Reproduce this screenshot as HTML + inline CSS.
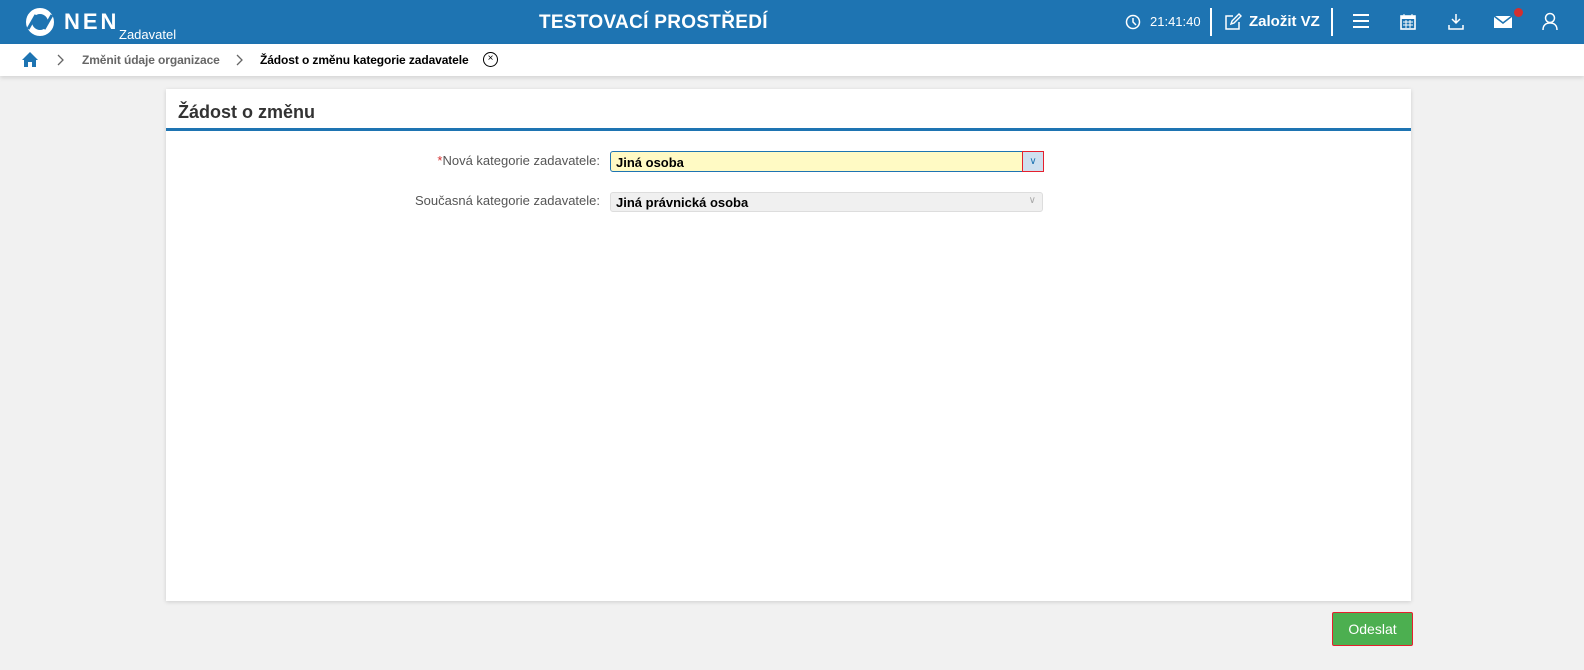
<!DOCTYPE html>
<html><head><meta charset="utf-8"><style>
*{box-sizing:border-box;margin:0;padding:0}
body{width:1584px;height:670px;background:#f1f1f1;font-family:"Liberation Sans",sans-serif;position:relative;overflow:hidden}
.top{position:absolute;left:0;top:0;width:1584px;height:44px;background:#1e74b2;color:#fff}
.bc{position:absolute;left:0;top:44px;width:1584px;height:32px;background:#fff;box-shadow:0 2px 4px rgba(0,0,0,.12)}
.abs{position:absolute;white-space:nowrap}
.card{position:absolute;left:166px;top:89px;width:1245px;height:512px;background:#fff;box-shadow:0 1px 4px rgba(0,0,0,.15)}
</style></head><body>
<div class="top">
 <svg class="abs" style="left:24px;top:7px" width="32" height="30" viewBox="0 0 32 30"><circle cx="16" cy="15" r="11" fill="none" stroke="#fff" stroke-width="6"/><path d="M4 22 L12 8" stroke="#1e74b2" stroke-width="3"/><path d="M20 22 L28 8" stroke="#1e74b2" stroke-width="3"/></svg>
 <div class="abs" style="left:64px;top:9px;font-size:22px;font-weight:bold;letter-spacing:3px">NEN</div>
 <div class="abs" style="left:119px;top:27px;font-size:13px">Zadavatel</div>
 <div class="abs" style="left:539px;top:12px;font-size:19px;font-weight:bold;letter-spacing:0.3px">TESTOVACÍ PROSTŘEDÍ</div>
 <svg class="abs" style="left:1125px;top:14px" width="16" height="16"><circle cx="8" cy="8" r="6.5" fill="none" stroke="#fff" stroke-width="1.5"/><path d="M8 4v4l3 3" stroke="#fff" stroke-width="1.5" fill="none"/></svg>
 <div class="abs" style="left:1150px;top:14px;font-size:13px">21:41:40</div>
 <div class="abs" style="left:1210px;top:8px;width:2px;height:28px;background:#fff"></div>
 <svg class="abs" style="left:1224px;top:13px" width="18" height="18"><path d="M9 3H2v13h13V9" stroke="#fff" stroke-width="1.5" fill="none"/><path d="M7 11l1-3 7-7 2 2-7 7z" stroke="#fff" stroke-width="1.4" fill="none"/></svg>
 <div class="abs" style="left:1249px;top:13px;font-size:15px;font-weight:bold">Založit VZ</div>
 <div class="abs" style="left:1331px;top:8px;width:2px;height:28px;background:#fff"></div>
 <div class="abs" style="left:1353px;top:14px;width:16px;height:2px;background:#fff;box-shadow:0 6px 0 #fff,0 12px 0 #fff"></div>
 <svg class="abs" style="left:1400px;top:13px" width="16" height="17"><rect x="1" y="3" width="14" height="13" fill="none" stroke="#fff" stroke-width="1.6"/><rect x="1" y="3" width="14" height="3" fill="#fff"/><path d="M4 1v3M12 1v3M3 9h10M3 12h10M6 7v8M10 7v8" stroke="#fff"/></svg>
 <svg class="abs" style="left:1447px;top:13px" width="18" height="18"><path d="M9 1v9M5 6l4 4 4-4M2 12v4h14v-4" stroke="#fff" stroke-width="1.5" fill="none"/></svg>
 <svg class="abs" style="left:1494px;top:15px" width="18" height="14"><rect x="0" y="1" width="18" height="12" fill="#fff"/><path d="M0 1l9 7 9-7" stroke="#1e74b2" stroke-width="1.5" fill="none"/></svg>
 <div class="abs" style="left:1514px;top:8px;width:9px;height:9px;border-radius:50%;background:#d32f2f"></div>
 <svg class="abs" style="left:1542px;top:12px" width="16" height="19"><circle cx="8" cy="6" r="4.5" fill="none" stroke="#fff" stroke-width="1.5"/><path d="M1 18c0-5 3-7 7-7s7 2 7 7" fill="none" stroke="#fff" stroke-width="1.5"/></svg>
</div>
<div class="bc">
 <svg class="abs" style="left:21px;top:7px" width="18" height="17"><path d="M9 1L1 9h2v7h4v-5h4v5h4V9h2z" fill="#1e74b2"/></svg>
 <svg class="abs" style="left:57px;top:10px" width="8" height="12"><path d="M1 1l5 5-5 5" stroke="#666" fill="none" stroke-width="1.3"/></svg>
 <div class="abs" style="left:82px;top:9px;color:#666;font-size:12px;font-weight:bold;letter-spacing:-0.1px">Změnit údaje organizace</div>
 <svg class="abs" style="left:236px;top:10px" width="8" height="12"><path d="M1 1l5 5-5 5" stroke="#666" fill="none" stroke-width="1.3"/></svg>
 <div class="abs" style="left:260px;top:9px;color:#000;font-size:12px;font-weight:bold;letter-spacing:-0.1px">Žádost o změnu kategorie zadavatele</div>
 <div class="abs" style="left:483px;top:8px;width:15px;height:15px;border:1.5px solid #000;border-radius:50%;font-size:10px;line-height:12px;text-align:center">×</div>
</div>
<div class="card">
 <div class="abs" style="left:12px;top:13px;font-size:18px;font-weight:bold;color:#333">Žádost o změnu</div>
 <div class="abs" style="left:0;top:39px;width:1245px;height:3px;background:#1e74b2"></div>
 <div class="abs" style="left:0;top:64px;width:434px;text-align:right;font-size:13px;color:#555"><span style="color:#d32f2f">*</span>Nová kategorie zadavatele:</div>
 <div class="abs" style="left:444px;top:62px;width:434px;height:21px;background:#fffac4;border:1px solid #1e74b2;border-radius:3px;font-size:13px;font-weight:bold;padding:3px 5px">Jiná osoba</div>
 <div class="abs" style="left:856px;top:62px;width:22px;height:21px;border:1px solid #e5202e;background:#cfe0ef;color:#1e74b2;font-size:10px;text-align:center;line-height:19px">∨</div>
 <div class="abs" style="left:0;top:104px;width:434px;text-align:right;font-size:13px;color:#555">Současná kategorie zadavatele:</div>
 <div class="abs" style="left:444px;top:103px;width:433px;height:20px;background:#f0f0f0;border:1px solid #ddd;border-radius:3px;font-size:13px;font-weight:bold;padding:2px 5px">Jiná právnická osoba<span style="position:absolute;right:6px;top:2px;color:#aaa;font-weight:normal;font-size:10px">∨</span></div>
</div>
<div class="abs" style="left:1332px;top:612px;width:81px;height:34px;background:#4caf50;border:1px solid #e5202e;border-radius:2px;color:#fff;font-size:14px;text-align:center;line-height:32px">Odeslat</div>
</body></html>
